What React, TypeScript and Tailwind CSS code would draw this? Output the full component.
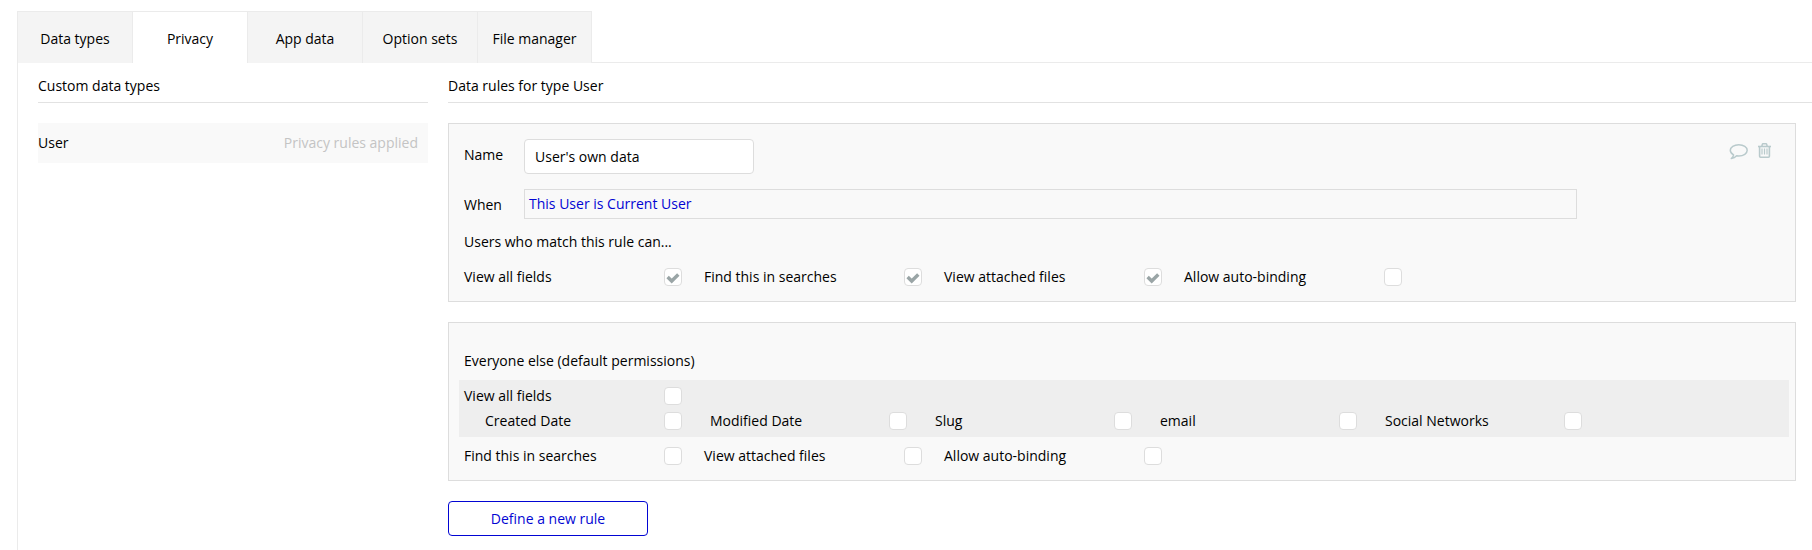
import { useState } from "react";

const tabs = ["Data types", "Privacy", "App data", "Option sets", "File manager"];

function Check({ label, checked = false, nested = false }: { label: string; checked?: boolean; nested?: boolean }) {
  const [on, setOn] = useState(checked);
  return (
    <label className={nested ? "flex w-[225px] items-center" : "flex w-[240px] items-center"}>
      <span className={nested ? "w-[179px]" : "w-[200px]"}>{label}</span>
      <span className="grid size-[18px]">
        <input
          type="checkbox"
          checked={on}
          onChange={() => setOn(!on)}
          className="col-start-1 row-start-1 size-[18px] appearance-none rounded border border-[#dddddd] bg-white"
        />
        {on && (
          <svg viewBox="0 0 18 18" className="pointer-events-none col-start-1 row-start-1 size-[18px]" aria-hidden="true">
            <path d="M3.600 9 L7.700 13 L14.300 6.500" fill="none" stroke="#9aa5a6" strokeWidth="3.400" />
          </svg>
        )}
      </span>
    </label>
  );
}

function CommentIcon() {
  return (
    <svg viewBox="0 0 19 17" className="h-[17px] w-[19px]" aria-hidden="true">
      <path
        d="M9.800 1.700C5 1.700 1.300 4.200 1.300 7.300c0 1.900 1.300 3.500 3.300 4.500C4.400 13.300 3.600 14.500 2.300 15.500c2.300-.3 4-1.200 5.300-2.700.7.1 1.400.1 2.200.1 4.800 0 8.400-2.500 8.400-5.600S14.600 1.700 9.800 1.700z"
        fill="none"
        stroke="#b9cacc"
        strokeWidth="1.500"
        strokeLinejoin="round"
      />
    </svg>
  );
}

function TrashIcon() {
  return (
    <svg viewBox="0 0 13 15" className="h-[15px] w-[13px]" aria-hidden="true">
      <g fill="none" stroke="#b9cacc">
        <path d="M0 3.500h13" strokeWidth="1.600" />
        <path d="M3.800 3.500L4.300 1.300Q4.400 .8 5 .8h3Q8.600 .8 8.700 1.300l.5 2.200" strokeWidth="1.500" />
        <path d="M1.600 3.500v9.800q0 .9.900.9h8q.9 0 .9-.9V3.500" strokeWidth="1.600" />
        <path d="M4 5.500v6M6.500 5.500v6M9 5.500v6" strokeWidth="1.200" />
      </g>
    </svg>
  );
}

export default function App() {
  const [name, setName] = useState("User's own data");
  return (
    <div className="flex min-h-screen flex-col bg-white pt-[11px] pl-[17px] font-['Open_Sans',sans-serif] text-sm leading-5 text-black">
      <nav className="flex">
        <div className="flex border-t border-r border-[#ebebeb]">
          {tabs.map((t) => (
            <button
              key={t}
              type="button"
              className={
                t === "Privacy"
                  ? "h-[51px] w-[115px] border-l border-[#ebebeb] bg-white pt-[2px]"
                  : "h-[51px] w-[115px] border-l border-[#ebebeb] bg-[#f4f4f4] pt-[2px] last:w-[114px]"
              }
            >
              {t}
            </button>
          ))}
        </div>
        <div className="flex-1 border-b border-[#ebebeb]" />
      </nav>

      <main className="flex flex-1 gap-5 border-l border-[#ebebeb] pl-5">
        <section className="w-[390px] shrink-0">
          <h2 className="border-b border-[#e2e2e2] pt-[13px] pb-[6px]">Custom data types</h2>
          <div className="mt-5 flex h-10 items-center justify-between bg-[#f9f9f9] pr-[10px]">
            <span>User</span>
            <span className="text-[#c4c4c4]">Privacy rules applied</span>
          </div>
        </section>

        <section className="min-w-0 flex-1">
          <h2 className="border-b border-[#e2e2e2] pt-[13px] pb-[6px]">Data rules for type User</h2>

          <div className="mt-5 mr-4 flex border border-[#dddddd] bg-[#f9f9f9] py-[15px] pl-[15px]">
            <div className="flex-1">
              <div className="flex items-start">
                <label htmlFor="rule-name" className="w-[60px] pt-[6px]">Name</label>
                <input
                  id="rule-name"
                  value={name}
                  onChange={(e) => setName(e.target.value)}
                  className="h-[35px] w-[230px] rounded border border-[#dddddd] bg-white px-[10px]"
                />
              </div>
              <div className="mt-[15px] flex items-start">
                <span className="w-[60px] pt-[6px]">When</span>
                <button type="button" className="h-[30px] flex-1 border border-[#dddddd] px-1 text-left text-[#0205d3]">
                  This User is Current User
                </button>
              </div>
              <p className="mt-[13px]">Users who match this rule can...</p>
              <div className="mt-4 flex h-[18px] items-center">
                <Check label="View all fields" checked />
                <Check label="Find this in searches" checked />
                <Check label="View attached files" checked />
                <Check label="Allow auto-binding" />
              </div>
            </div>
            <div className="flex w-[218px] items-start justify-end gap-[10px] pt-1 pr-6">
              <button type="button" aria-label="Comment"><CommentIcon /></button>
              <button type="button" aria-label="Delete rule"><TrashIcon /></button>
            </div>
          </div>

          <div className="mt-5 mr-4 border border-[#dddddd] bg-[#f9f9f9] pt-7 pr-[6px] pb-[15px] pl-[10px]">
            <p className="pl-[5px]">Everyone else (default permissions)</p>
            <div className="mt-[9px] flex flex-col gap-[7px] bg-[#eeeeee] py-[7px] pl-[5px]">
              <div className="flex h-[18px] items-center">
                <Check label="View all fields" />
              </div>
              <div className="flex h-[18px] items-center pl-[21px]">
                {["Created Date", "Modified Date", "Slug", "email", "Social Networks"].map((f) => (
                  <Check key={f} label={f} nested />
                ))}
              </div>
            </div>
            <div className="mt-[10px] flex h-[18px] items-center pl-[5px]">
              <Check label="Find this in searches" />
              <Check label="View attached files" />
              <Check label="Allow auto-binding" />
            </div>
          </div>

          <button type="button" className="mt-5 h-[35px] w-[200px] rounded border border-[#0205d3] bg-white text-[#0205d3]">
            Define a new rule
          </button>
        </section>
      </main>
    </div>
  );
}
